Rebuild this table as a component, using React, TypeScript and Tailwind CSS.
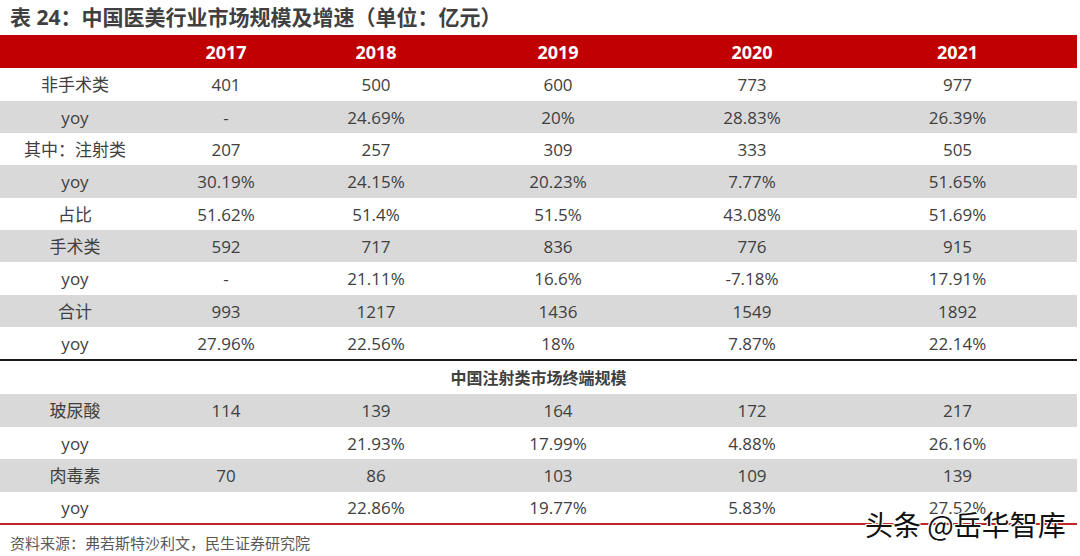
import React from "react";

const cols = ["w-[150px]", "w-[152px]", "w-[148px]", "w-[216px]", "w-[172px]", "w-[239px]"];

type Row = { cells: string[]; grey: boolean; h: string };

const top: Row[] = [
  { cells: ["非手术类", "401", "500", "600", "773", "977"], grey: false, h: "h-[33px]" },
  { cells: ["yoy", "-", "24.69%", "20%", "28.83%", "26.39%"], grey: true, h: "h-[32px]" },
  { cells: ["其中：注射类", "207", "257", "309", "333", "505"], grey: false, h: "h-[32px]" },
  { cells: ["yoy", "30.19%", "24.15%", "20.23%", "7.77%", "51.65%"], grey: true, h: "h-[33px]" },
  { cells: ["占比", "51.62%", "51.4%", "51.5%", "43.08%", "51.69%"], grey: false, h: "h-[32px]" },
  { cells: ["手术类", "592", "717", "836", "776", "915"], grey: true, h: "h-[32px]" },
  { cells: ["yoy", "-", "21.11%", "16.6%", "-7.18%", "17.91%"], grey: false, h: "h-[33px]" },
  { cells: ["合计", "993", "1217", "1436", "1549", "1892"], grey: true, h: "h-[32px]" },
  { cells: ["yoy", "27.96%", "22.56%", "18%", "7.87%", "22.14%"], grey: false, h: "h-[32px]" },
];

const bottom: Row[] = [
  { cells: ["玻尿酸", "114", "139", "164", "172", "217"], grey: true, h: "h-[33px]" },
  { cells: ["yoy", "", "21.93%", "17.99%", "4.88%", "26.16%"], grey: false, h: "h-[32px]" },
  { cells: ["肉毒素", "70", "86", "103", "109", "139"], grey: true, h: "h-[33px]" },
  { cells: ["yoy", "", "22.86%", "19.77%", "5.83%", "27.52%"], grey: false, h: "h-[31px]" },
];

function DataRow({ row }: { row: Row }) {
  return (
    <div className={`flex items-center ${row.h} ${row.grey ? "bg-[#d9d9d9]" : "bg-white"}`}>
      {row.cells.map((c, i) => (
        <div key={i} className={`${cols[i]} text-center`}>
          {c}
        </div>
      ))}
    </div>
  );
}

export default function App() {
  return (
    <div
      className="relative h-[556px] w-[1080px] overflow-hidden bg-white text-[#404040]"
      style={{ fontFamily: '"Open Sans", "Noto Sans CJK SC", sans-serif' }}
    >
      <h1 className="flex h-[35px] items-center pl-[10px] text-[21px] font-bold leading-none text-[#404040]">
        表 24：中国医美行业市场规模及增速（单位：亿元）
      </h1>

      <div className="w-[1077px] text-[17px] leading-none">
        <div className="flex h-[33px] items-center bg-[#c00000] text-[18px] font-bold text-white">
          {["", "2017", "2018", "2019", "2020", "2021"].map((c, i) => (
            <div key={i} className={`${cols[i]} text-center`}>
              {c}
            </div>
          ))}
        </div>

        {top.map((r, i) => (
          <DataRow key={i} row={r} />
        ))}

        <div className="h-[2px] bg-[#1a1a1a]" />

        <div className="flex h-[33px] items-center justify-center text-[16px] font-bold text-[#404040]">
          中国注射类市场终端规模
        </div>

        {bottom.map((r, i) => (
          <DataRow key={i} row={r} />
        ))}

        <div className="h-[2px] bg-[#c0272d]" />
      </div>

      <div className="flex h-[36px] items-center pl-[10px] text-[15px] text-[#595959]">
        资料来源：弗若斯特沙利文，民生证券研究院
      </div>

      <div className="absolute left-[865px] top-[510px] whitespace-nowrap text-[28px] leading-none text-[#111] [font-family:'Noto_Sans_CJK_SC',sans-serif] [text-shadow:1px_1px_0_#fff,-1px_-1px_0_#fff,1px_-1px_0_#fff,-1px_1px_0_#fff]">
        头条 @岳华智库
      </div>
    </div>
  );
}
